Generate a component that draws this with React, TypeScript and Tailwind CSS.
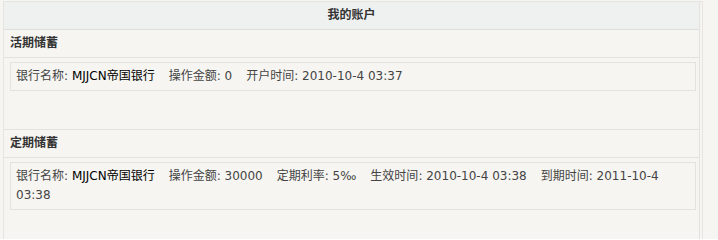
import React from "react";

const font = "font-['DejaVu_Sans','Noto_Sans_CJK_SC',sans-serif]";

const Field = ({ label, value, dark }: { label: string; value: string; dark?: boolean }) => (
  <span className="mr-[14px]">
    {label}: <span className={dark ? "text-black" : ""}>{value}</span>
  </span>
);

const SectionTitle = ({ title }: { title: string }) => (
  <div className="h-[28px] border-b border-[#e3e2de] pl-[6px] text-[12px] font-bold leading-[27px] text-[#333]">
    {title}
  </div>
);

const Box = ({ children }: { children: React.ReactNode }) => (
  <div className="ml-[6px] mr-[3px] mt-[4px] border border-[#e3e2de] px-[5px] py-[4px] text-[12px] leading-[19px] text-[#444]">
    {children}
  </div>
);

export default function App() {
  return (
    <div className={`${font} h-[239px] w-full overflow-hidden bg-[#f6f5f1] pl-[3px] pt-px`}>
      <div className="h-[300px] w-[700px] border border-[#e6e5e2]">
        <div className="mr-[2px] h-full border-r border-[#e3e2de]">
          <div className="h-[28px] border-b border-[#dfdfdf] bg-[#eff0f0] text-center text-[12px] font-bold leading-[27px] text-[#333]">
            我的账户
          </div>
          <SectionTitle title="活期储蓄" />
          <div className="h-[68px] border-b border-[#e3e2de]">
            <Box>
              <Field label="银行名称" value="MJJCN帝国银行" dark />
              <Field label="操作金额" value="0" />
              <Field label="开户时间" value="2010-10-4 03:37" />
            </Box>
          </div>
          <SectionTitle title="定期储蓄" />
          <div>
            <Box>
              <Field label="银行名称" value="MJJCN帝国银行" dark />
              <Field label="操作金额" value="30000" />
              <Field label="定期利率" value="5‰" />
              <Field label="生效时间" value="2010-10-4 03:38" />
              <span className="whitespace-nowrap">到期时间: 2011-10-4</span>
              <br />
              03:38
            </Box>
          </div>
        </div>
      </div>
    </div>
  );
}
